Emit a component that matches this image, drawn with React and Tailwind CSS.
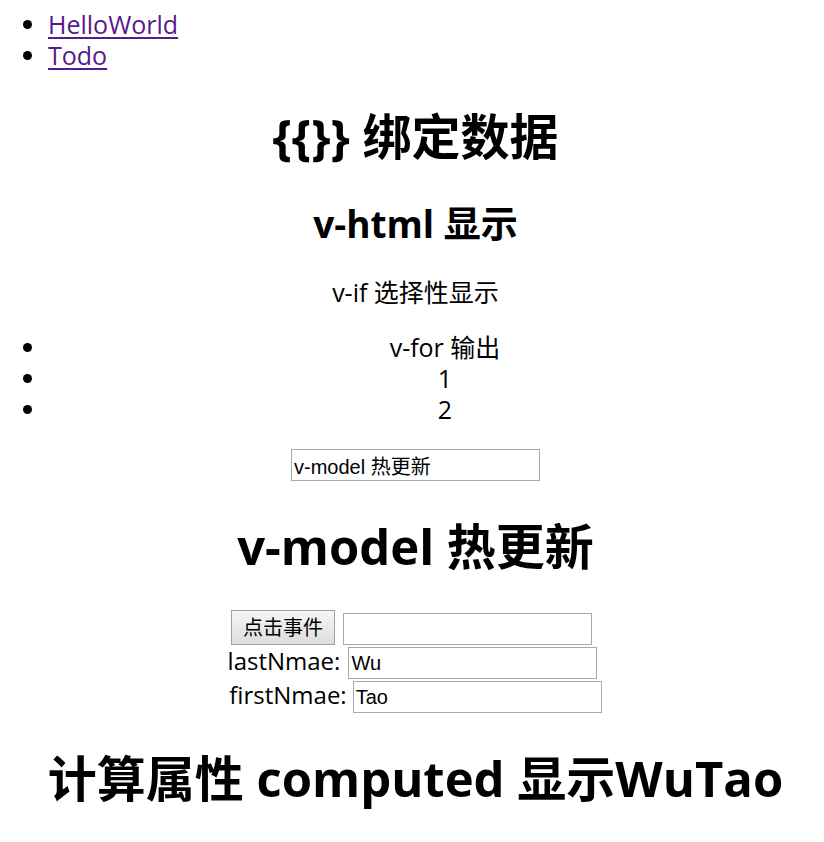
import { useState } from "react";

const heading =
  "text-center text-[49px] leading-[63px] font-bold";
const field =
  "h-8 w-[249px] border border-[#a9a9a9] bg-white px-[2px] text-[20px] font-['Liberation_Sans','Noto_Sans_CJK_SC',sans-serif] outline-none";

export default function App() {
  const [message, setMessage] = useState("v-model 热更新");
  const [note, setNote] = useState("");
  const [lastName, setLastName] = useState("Wu");
  const [firstName, setFirstName] = useState("Tao");

  return (
    <div className="bg-white pt-[9px] pb-6 text-[25px] leading-[31px] text-black font-['Open_Sans','Noto_Sans_CJK_SC',sans-serif]">
      <ul className="list-disc pl-12">
        <li>
          <a href="#hello" className="text-[#551a8b] underline decoration-2 underline-offset-3">HelloWorld</a>
        </li>
        <li>
          <a href="#todo" className="text-[#551a8b] underline decoration-2 underline-offset-3">Todo</a>
        </li>
      </ul>
      <main className="pl-[7px]">
        <h1 className={`${heading} mt-[34px]`}>{"{{}}"} 绑定数据</h1>
        <h2 className="mt-8 text-center text-[37px] leading-[47px] font-bold">v-html 显示</h2>
        <p className="mt-[30px] text-center">v-if 选择性显示</p>
        <ul className="mt-6 list-disc pl-[41px] text-center">
          <li className="pl-[18px]">v-for 输出</li>
          <li className="pl-[18px]">1</li>
          <li className="pl-[18px]">2</li>
        </ul>
        <div className="mt-6 flex justify-center">
          <input aria-label="v-model" className={field} value={message} onChange={(e) => setMessage(e.target.value)} />
        </div>
        <h1 className={`${heading} mt-[34px]`}>{message}</h1>
        <div className="mt-8 flex flex-col items-center gap-[2px] text-[24px]">
          <div className="flex items-end gap-2 pr-2">
            <button type="button" className="h-[35px] w-[104px] border border-[#a0a0a0] bg-linear-to-b from-[#f6f6f6] to-[#dddddd] text-[20px] leading-[30px] font-['Liberation_Sans','Noto_Sans_CJK_SC',sans-serif]">
              点击事件
            </button>
            <input aria-label="点击事件" className={field} value={note} onChange={(e) => setNote(e.target.value)} />
          </div>
          <label className="flex items-center gap-2 pr-[6px] leading-[27px]">
            <span className="self-start">lastNmae:</span>
            <input className={field} value={lastName} onChange={(e) => setLastName(e.target.value)} />
          </label>
          <label className="flex items-center gap-[6px] leading-[27px]">
            <span className="self-start">firstNmae:</span>
            <input className={field} value={firstName} onChange={(e) => setFirstName(e.target.value)} />
          </label>
        </div>
        <h1 className={`${heading} mt-[34px]`}>计算属性 computed 显示{lastName}{firstName}</h1>
      </main>
    </div>
  );
}
